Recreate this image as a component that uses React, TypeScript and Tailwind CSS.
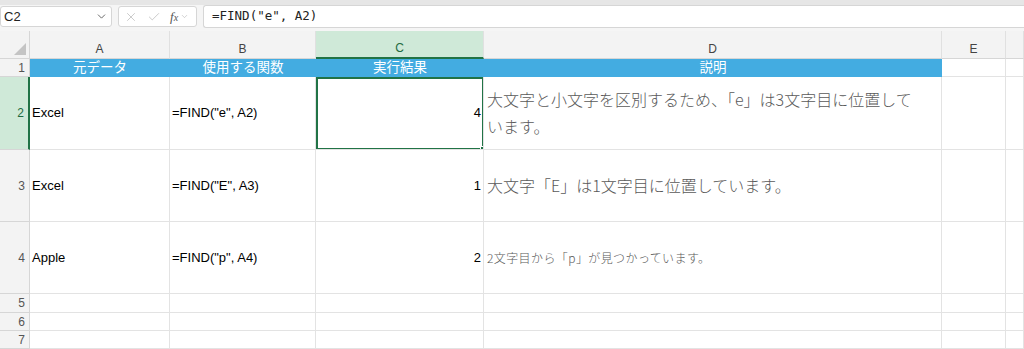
import { X, Check, ChevronDown } from 'lucide-react';

const cols = ['A', 'B', 'C', 'D', 'E', ''];
const heights = ['h-[18px]', 'h-[73px]', 'h-[72px]', 'h-[72px]', 'h-[19px]', 'h-[18px]', 'h-[18px]'];

const rows = [
	{ a: 'Excel', b: '=FIND("e", A2)', c: '4', d: '大文字と小文字を区別するため、「e」は3文字目に位置しています。', big: true },
	{ a: 'Excel', b: '=FIND("E", A3)', c: '1', d: '大文字「E」は1文字目に位置しています。', big: true },
	{ a: 'Apple', b: '=FIND("p", A4)', c: '2', d: '2文字目から「p」が見つかっています。', big: false },
];

const cell = 'border-r border-b border-[#e3e3e3] flex items-center overflow-hidden';

export default function App() {
	return (
		<div className="w-[1024px] h-[349px] overflow-hidden bg-white font-['Liberation_Sans','Noto_Sans_CJK_JP',sans-serif] text-[13px] text-black">
			{/* FORMULA BAR */}
			<div className="h-[31px] bg-[#f5f5f5] border-t-[5px] border-[#e6e6e6] flex items-center gap-[6px] pb-[3px]">
				<div className="w-[112px] h-[21px] bg-white border border-[#d6d6d6] rounded-[3px] flex items-center justify-between pl-[3px] pr-[3px]">
					<span className="text-[13px] text-[#222]">C2</span>
					<ChevronDown size={13} strokeWidth={1.6} className="text-[#555]" />
				</div>
				<div className="w-[79px] h-[21px] bg-white border border-[#d6d6d6] rounded-[3px] flex items-center gap-[9px] pl-[5px]">
					<X size={14} strokeWidth={1.2} className="text-[#b5b5b5]" />
					<Check size={14} strokeWidth={1.2} className="text-[#b5b5b5]" />
					<span className="flex items-center gap-[2px]">
						<span className="font-['Liberation_Serif',serif] italic text-[13px] text-[#555]">f<span className="text-[10px]">x</span></span>
						<ChevronDown size={9} strokeWidth={1.4} className="text-[#aaa]" />
					</span>
				</div>
				<div className="flex-1 h-[23px] bg-white border border-[#d6d6d6] border-r-0 rounded-l-[3px] flex items-center pl-[8px]">
					<span className="font-['DejaVu_Sans_Mono',monospace] text-[12.5px] text-[#222]">=FIND("e", A2)</span>
				</div>
			</div>

			{/* GRID */}
			<div className="grid grid-cols-[30px_140px_146px_168px_458px_64px_1fr]">
				{/* column headers */}
				<div className="h-[28px] bg-[#f3f3f3] border-r border-b border-[#d6d6d6] flex items-end justify-end p-[3px]">
					<svg width="12" height="12" viewBox="0 0 12 12">
						<polygon points="12,0 12,12 0,12" fill="#c4c4c4" />
					</svg>
				</div>
				{cols.map((c, i) => (
					<div
						key={i}
						className={`h-[28px] flex items-end justify-center pb-0 text-[12px] border-r border-[#e0e0e0] ${c == 'C' ? 'bg-[#cfe9d8] text-[#1d6b3f] border-b-2 border-b-[#217346]' : 'bg-[#f3f3f3] text-[#444] border-b border-b-[#d6d6d6]'}`}
					>
						{c}
					</div>
				))}

				{/* row 1 */}
				<div className={`${heights[0]} bg-[#f3f3f3] border-r border-b border-[#d6d6d6] flex items-center justify-end pr-[4px] text-[12px] text-[#555]`}>1</div>
				{['元データ', '使用する関数', '実行結果', '説明'].map(t => (
					<div key={t} className={`${heights[0]} bg-[#43ace1] text-white flex items-center justify-center text-[13.5px]`}>
						{t}
					</div>
				))}
				<div className={`${heights[0]} ${cell}`} />
				<div className={`${heights[0]} ${cell}`} />

				{/* data rows */}
				{rows.map((r, i) => {
					const h = heights[i + 1];
					const sel = i == 0;
					return [
						<div
							key={`n${i}`}
							className={`${h} border-b flex items-center justify-end pr-[4px] text-[12px] ${sel ? 'bg-[#cfe9d8] text-[#1d6b3f] border-r-2 border-r-[#217346] border-b-[#d6d6d6]' : 'bg-[#f3f3f3] text-[#555] border-r border-[#d6d6d6]'}`}
						>
							{i + 2}
						</div>,
						<div key={`a${i}`} className={`${h} ${cell} pl-[2px]`}>{r.a}</div>,
						<div key={`b${i}`} className={`${h} ${cell} pl-[2px]`}>{r.b}</div>,
						<div key={`c${i}`} className={`${h} ${cell} justify-end pr-[2px] relative`}>
							{r.c}
							{sel && (
								<div className="absolute left-0 top-0 -right-px -bottom-px border-2 border-[#217346]">
									<div className="absolute -right-[3px] -bottom-[3px] w-[5px] h-[5px] bg-[#217346] border border-white" />
								</div>
							)}
						</div>,
						<div
							key={`d${i}`}
							className={`${h} ${cell} pl-[3px] pr-[20px] text-[#595959] ${r.big ? 'text-[16px] leading-[27px]' : 'text-[12px] tracking-[0.4px]'} font-['Noto_Sans_CJK_JP',sans-serif] font-light`}
						>
							{r.d}
						</div>,
						<div key={`e${i}`} className={`${h} ${cell}`} />,
						<div key={`f${i}`} className={`${h} ${cell}`} />,
					];
				})}

				{/* empty rows */}
				{[5, 6, 7].map((n, i) => [
					<div key={`n${n}`} className={`${heights[i + 4]} bg-[#f3f3f3] border-r border-b border-[#d6d6d6] flex items-center justify-end pr-[4px] text-[12px] text-[#555]`}>{n}</div>,
					...cols.map((c, j) => <div key={`${n}${j}`} className={`${heights[i + 4]} ${cell}`} />),
				])}
			</div>
		</div>
	);
}
